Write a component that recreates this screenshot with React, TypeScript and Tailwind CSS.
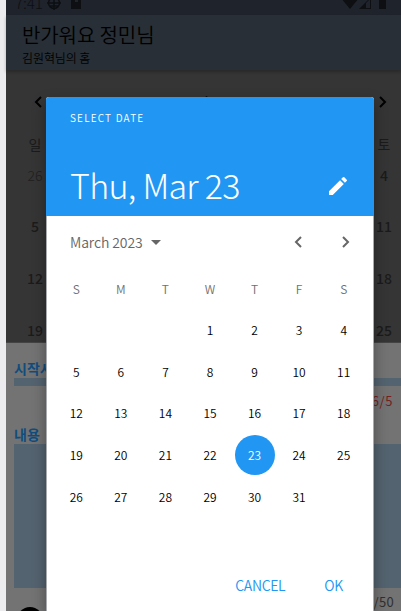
const days = ['S', 'M', 'T', 'W', 'T', 'F', 'S'];
const cells: (number | null)[] = [null, null, null, ...Array.from({ length: 31 }, (_, i) => i + 1), null];
const samsung = "font-['Noto_Sans_CJK_KR',sans-serif]";

function Chevron({ right = false, className = '' }: { right?: boolean; className?: string }) {
  return (
    <svg viewBox="0 0 8 12" className={`h-3 w-2 ${className}`} fill="none" stroke="currentColor" strokeWidth="2">
      <path d={right ? 'M1 1l5 5-5 5' : 'M7 1L2 6l5 5'} />
    </svg>
  );
}

function StatusBar() {
  return (
    <div className="relative h-[15px] shrink-0 overflow-hidden bg-[#1f232b] text-[#0d0f12]">
      <span className="absolute left-[9px] top-[-7px] text-[15px] font-light leading-[20px]">7:41</span>
      <svg className="absolute left-[41px] top-[-4px] h-[14px] w-[14px]" viewBox="0 0 14 14" fill="none" stroke="currentColor" strokeWidth="1.5">
        <circle cx="7" cy="7" r="5.5" />
        <path d="M0 7h14M7 0v14M3 10h8" />
      </svg>
      <svg className="absolute left-[65px] top-[-4px] h-[13px] w-[10px]" viewBox="0 0 10 13" fill="currentColor">
        <path d="M0 3l3-3h7v13H0zM4 4v2h3V4z" fillRule="evenodd" />
      </svg>
      <svg className="absolute left-[335px] top-[-3px] h-[12px] w-[18px]" viewBox="0 0 18 12" fill="currentColor">
        <path d="M0 1Q9-3 18 1L9 12z" />
      </svg>
      <svg className="absolute left-[352px] top-[-3px] h-[12px] w-[14px]" viewBox="0 0 14 12" fill="currentColor">
        <path d="M1 12L13 0v12zM8 6v5h4V2z" fillRule="evenodd" />
      </svg>
      <div className="absolute left-[373px] top-0 h-[9px] w-[7px] bg-current" />
    </div>
  );
}

function EdgeRow({ left, right, className }: { left: string; right: string; className: string }) {
  return (
    <div className={`flex items-center justify-between text-[14px] ${className}`}>
      <span className="w-[58px] text-center">{left}</span>
      <span className="w-[34px] text-center">{right}</span>
    </div>
  );
}

function Dialog() {
  return (
    <section className="absolute left-[46px] top-[97px] flex h-[514px] w-[328px] flex-col overflow-hidden rounded-t-[3px] bg-white shadow-[0_6px_14px_rgba(0,0,0,0.35)]">
      <header className="flex h-[119px] shrink-0 flex-col bg-[#2196f3] pl-[24px] pr-[24px] text-white">
        <span className="mt-[12px] text-[10px] font-[350] leading-[18px] tracking-[1.2px]">SELECT DATE</span>
        <div className="mt-[34px] flex items-center justify-between">
          <h1 className="whitespace-nowrap text-[34px] font-light leading-[48px] tracking-[-0.7px]">Thu, Mar 23</h1>
          <svg viewBox="0 0 24 24" className="mt-[2px] size-[24px]" fill="currentColor">
            <path d="M3 17.25V21h3.75L17.81 9.94l-3.75-3.75zM20.71 7.04a1 1 0 0 0 0-1.41l-2.34-2.34a1 1 0 0 0-1.41 0l-1.83 1.83 3.75 3.75z" />
          </svg>
        </div>
      </header>
      <div className="flex grow flex-col border-x border-[#a8abad]">
        <div className="flex h-[52px] shrink-0 items-center pl-[23px] pr-[23px] text-[#666]">
          <span className="text-[14px] font-[350] tracking-[-0.1px]">March 2023</span>
          <svg viewBox="0 0 10 5" className="ml-[8px] h-[5px] w-[10px]" fill="currentColor"><path d="M0 0h10L5 5z" /></svg>
          <Chevron className="ml-auto" />
          <Chevron right className="ml-[40px]" />
        </div>
        <div className="ml-[7px] grid w-[312px] grid-cols-7 text-center text-[12px] font-[350] text-black">
          {days.map((d, i) => (
            <span key={i} className="flex h-[41px] items-center justify-center text-[12px] text-[#707070]">{d}</span>
          ))}
          {cells.map((n, i) => (
            <span key={i} className="flex h-[41.7px] items-center justify-center">
              <span className={n === 23 ? 'mt-px flex size-10 items-center justify-center rounded-full bg-[#2196f3] text-white' : ''}>{n}</span>
            </span>
          ))}
        </div>
        <footer className="mt-auto flex h-[51px] items-center justify-end gap-[39px] pr-[30px] text-[14px] font-[350] tracking-[-0.3px] text-[#2196f3]">
          <span>CANCEL</span><span>OK</span>
        </footer>
      </div>
    </section>
  );
}

export default function App() {
  return (
    <main className={`relative flex h-[611px] w-[401px] overflow-hidden bg-[#ececef] ${samsung}`}>
      <div className="ml-[6px] flex w-[395px] flex-col bg-[#737373]">
        <StatusBar />
        <header className="z-0 h-[55px] shrink-0 bg-[#282f36] pl-4 text-black shadow-[0_2px_3px_rgba(0,0,0,0.25)]">
          <h2 className="pt-[6px] text-[20px] font-[350] leading-[28px] tracking-[-0.1px]">반가워요 정민님</h2>
          <p className="text-[12px] font-[350] leading-[17px] tracking-[-0.1px]">김원혁님의 홈</p>
        </header>
        <div className="flex h-[273px] shrink-0 flex-col overflow-hidden border-b border-[#444] bg-[#353535] text-[#1b1b1b]">
          <div className="mt-[22px] flex h-5 items-center justify-between pl-[28px] pr-[14px] text-black">
            <Chevron /><span className="text-[16px]">March 2023</span><Chevron right />
          </div>
          <EdgeRow left="일" right="토" className="mt-[22px] h-5" />
          <div className="mt-[11px] flex h-5 items-center justify-between text-[14px]">
            <span className="w-[58px] text-center font-light text-[#202020]">26</span><span className="w-[34px] text-center font-medium">4</span>
          </div>
          <EdgeRow left="5" right="11" className="mt-[31px] h-5 font-medium" />
          <EdgeRow left="12" right="18" className="mt-[32px] h-5 font-medium" />
          <EdgeRow left="19" right="25" className="mt-[32px] h-5 font-medium" />
        </div>
        <div className="flex grow flex-col pl-2">
          <h3 className="mt-[15px] h-5 text-[14px] font-bold leading-5 text-[#104d7e]">시작시간</h3>
          <div className="h-2 bg-[#53636f]" />
          <div className="h-[39px] pr-[8px] pt-[5px] text-right text-[13px] leading-5 tracking-[0.6px] text-[#781f1f]">26/5</div>
          <h3 className="h-[19px] text-[14px] font-bold leading-[18px] text-[#104d7e]">내용</h3>
          <div className="h-[144px] bg-[#53636f]" />
          <div className="flex justify-between pr-[7px] text-[13px] text-[#303030]">
            <span className="ml-[3px] mt-[19px] size-[26px] rounded-full bg-black" />
            <span className="mt-[4px] tracking-[0.3px]">0/50</span>
          </div>
        </div>
      </div>
      <Dialog />
    </main>
  );
}
